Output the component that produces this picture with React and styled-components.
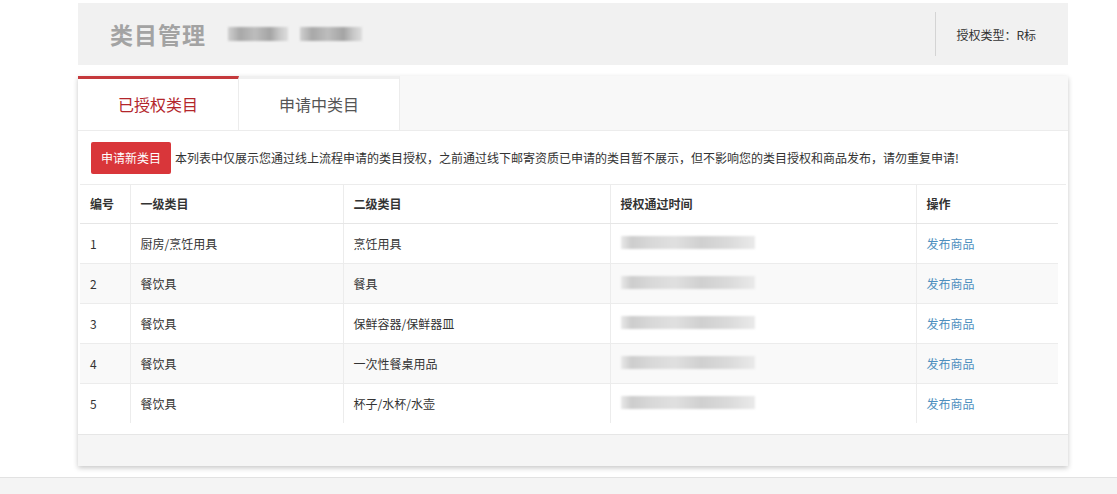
import React from "react";
import styled, { createGlobalStyle } from "styled-components";

const GlobalStyle = createGlobalStyle`
  html, body {
    margin: 0;
    padding: 0;
    background: #fff;
    font-family: "Noto Sans CJK SC", "Noto Sans", "Liberation Sans", sans-serif;
    color: #333;
  }
`;

const Page = styled.div`
  width: 1117px;
  height: 494px;
  overflow: hidden;
  display: flex;
  flex-direction: column;
`;

const Main = styled.div`
  padding: 3px 49px 0 78px;
  display: flex;
  flex-direction: column;
  gap: 11px;
`;

const Header = styled.div`
  height: 62px;
  background: #f1f1f1;
  display: flex;
  align-items: center;
  padding-left: 32px;
  box-sizing: border-box;
`;

const Title = styled.h1`
  margin: 0;
  font-size: 23px;
  font-weight: 700;
  color: #a3a3a3;
  letter-spacing: 1px;
`;

const Blur = styled.span`
  display: inline-block;
  width: ${(p) => p.w}px;
  height: ${(p) => p.h || 12}px;
  margin-left: ${(p) => p.ml || 0}px;
  background: ${(p) => p.bg || "linear-gradient(90deg,#d0d0d0,#a8a8a8 20%,#bdbdbd 45%,#a4a4a4 70%,#c6c6c6 85%,#dedede)"};
  filter: blur(1.2px);
`;

const TitleBlurs = styled.div`
  display: flex;
  align-items: center;
  margin-left: 22px;
  flex: 1;
`;

const TypeBox = styled.div`
  border-left: 1px solid #d4d4d4;
  height: 44px;
  display: flex;
  align-items: center;
  padding: 0 32px 0 20px;
  font-size: 12px;
  color: #333;
`;

const Panel = styled.div`
  background: #fff;
  box-shadow: 0 2px 5px rgba(0, 0, 0, 0.22);
  display: flex;
  flex-direction: column;
`;

const Tabs = styled.div`
  display: flex;
  height: 54px;
  background: #f8f8f8;
  border-bottom: 1px solid #ececec;
`;

const Tab = styled.div`
  width: 161px;
  display: flex;
  align-items: center;
  justify-content: center;
  font-size: 16px;
  background: #fff;
  border-top: 3px solid ${(p) => (p.active ? "#c5393c" : "#f0f0f0")};
  border-right: 1px solid #ececec;
  color: ${(p) => (p.active ? "#b3262b" : "#555")};
  box-sizing: border-box;
  padding-bottom: 2px;
`;

const Notice = styled.div`
  display: flex;
  align-items: center;
  height: 53px;
  padding: 0 12px;
  font-size: 12px;
  color: #333;
  border-bottom: 1px solid #ececec;
  margin: 0 2px;
`;

const ApplyButton = styled.button`
  background: #d9363a;
  color: #fff;
  border: none;
  border-radius: 2px;
  font-family: inherit;
  font-size: 12px;
  height: 32px;
  padding: 0 10px;
  margin-right: 4px;
  margin-left: -1px;
`;

const Table = styled.table`
  border-collapse: collapse;
  width: calc(100% - 12px);
  margin: 0 10px 0 2px;
  font-size: 12px;
  color: #333;
  table-layout: fixed;
`;

const Th = styled.th`
  box-sizing: border-box;
  text-align: left;
  font-weight: 600;
  height: 38px;
  padding: 0 10px;
  border-left: 1px solid #ececec;
  border-bottom: 1px solid #e6e6e6;
  width: ${(p) => (p.w ? `${p.w}px` : "auto")};
  &:first-child {
    border-left: none;
  }
`;

const Row = styled.tr`
  background: ${(p) => (p.striped ? "#f9f9f9" : "#fff")};
`;

const Td = styled.td`
  height: 39px;
  padding: 0 10px;
  border-left: 1px solid #ececec;
  border-bottom: 1px solid #ececec;
  white-space: nowrap;
  &:first-child {
    border-left: none;
  }
  tr:last-child > & {
    border-bottom: none;
  }
`;

const Link = styled.a`
  color: #4d8fbe;
  text-decoration: none;
`;

const PanelFooter = styled.div`
  margin-top: 11px;
  height: 31px;
  background: #f5f5f5;
  border-top: 1px solid #e6e6e6;
`;

const PageFooter = styled.div`
  margin-top: 11px;
  flex: 1;
  background: #f4f4f4;
  border-top: 1px solid #e2e2e2;
`;

const rows = [
  ["1", "厨房/烹饪用具", "烹饪用具"],
  ["2", "餐饮具", "餐具"],
  ["3", "餐饮具", "保鲜容器/保鲜器皿"],
  ["4", "餐饮具", "一次性餐桌用品"],
  ["5", "餐饮具", "杯子/水杯/水壶"],
];

const TimeBlur = () => (
  <Blur
    w={134}
    h={13}
    bg="linear-gradient(90deg,#e8e8e8,#cdcdcd 8%,#d8d8d8 22%,#e0e0e0 40%,#d0d0d0 60%,#dadada 80%,#eaeaea)"
  />
);

export default function App() {
  return (
    <Page>
      <GlobalStyle />
      <Main>
        <Header>
          <Title>类目管理</Title>
          <TitleBlurs>
            <Blur w={60} h={14} />
            <Blur w={62} h={14} ml={12} />
          </TitleBlurs>
          <TypeBox>授权类型：R标</TypeBox>
        </Header>
        <Panel>
          <Tabs>
            <Tab active>已授权类目</Tab>
            <Tab>申请中类目</Tab>
          </Tabs>
          <Notice>
            <ApplyButton>申请新类目</ApplyButton>
            本列表中仅展示您通过线上流程申请的类目授权，之前通过线下邮寄资质已申请的类目暂不展示，但不影响您的类目授权和商品发布，请勿重复申请!
          </Notice>
          <Table>
            <thead>
              <tr>
                <Th w={50}>编号</Th>
                <Th w={213}>一级类目</Th>
                <Th w={267}>二级类目</Th>
                <Th w={306}>授权通过时间</Th>
                <Th>操作</Th>
              </tr>
            </thead>
            <tbody>
              {rows.map((r, i) => (
                <Row key={r[0]} striped={i % 2 === 1}>
                  <Td>{r[0]}</Td>
                  <Td>{r[1]}</Td>
                  <Td>{r[2]}</Td>
                  <Td>
                    <TimeBlur />
                  </Td>
                  <Td>
                    <Link>发布商品</Link>
                  </Td>
                </Row>
              ))}
            </tbody>
          </Table>
          <PanelFooter />
        </Panel>
      </Main>
      <PageFooter />
    </Page>
  );
}
